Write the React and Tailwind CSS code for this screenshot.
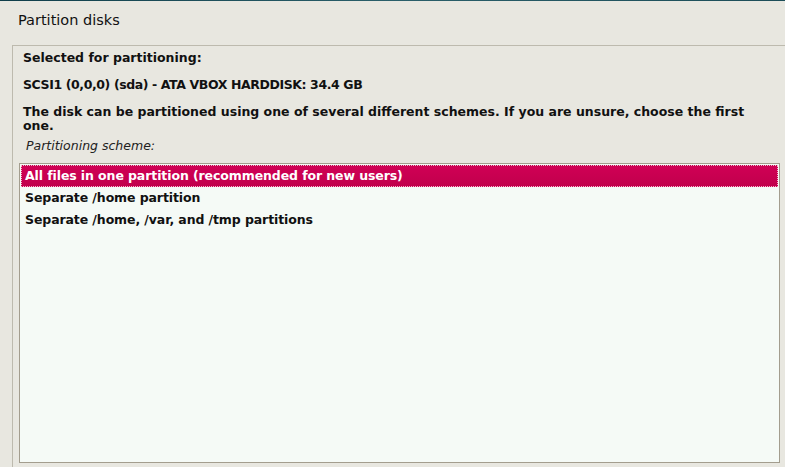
const OPTIONS = [
  'All files in one partition (recommended for new users)',
  'Separate /home partition',
  'Separate /home, /var, and /tmp partitions',
];

export default function App() {
  const selected = 0;

  return (
    <div
      className="h-[467px] w-[785px] overflow-hidden bg-[#e8e7e0] text-[#111] flex flex-col"
      style={{ fontFamily: '"DejaVu Sans", "Liberation Sans", sans-serif' }}
    >
      {/* top strip */}
      <div className="h-px shrink-0 bg-gradient-to-r from-[#0f3e4a] via-[#2a5f6a] to-[#1c4d58]" />

      {/* title */}
      <div className="h-[44px] shrink-0 pl-[18px] pt-[11px] text-[14.5px] leading-[16px]">
        Partition disks
      </div>

      {/* panel */}
      <div className="flex-1 min-h-0 ml-[12px] border-l border-t border-[#bdbaae] pl-[6px] pr-[5px] pt-[5px] flex flex-col">
        <div className="px-[4px] text-[12.5px] font-bold leading-[14px]">
          Selected for partitioning:
        </div>
        <div className="px-[4px] mt-[13px] text-[12.5px] font-bold leading-[14px] tracking-[-0.4px]">
          SCSI1 (0,0,0) (sda) - ATA VBOX HARDDISK: 34.4 GB
        </div>
        <div className="px-[4px] mt-[13px] text-[12.5px] font-bold leading-[14px] pr-[30px]">
          The disk can be partitioned using one of several different schemes. If you are unsure, choose the first one.
        </div>
        <div className="pl-[7px] mt-[6px] text-[12.5px] italic leading-[14px] text-[#222]">
          Partitioning scheme:
        </div>

        {/* list */}
        <div className="mt-[10px] h-[300px] shrink-0 border border-[#a39d8e] bg-[#f5faf6] p-px">
          {OPTIONS.map((label, i) => (
            <div
              key={label}
              className={`h-[22px] pl-[3px] text-[12.5px] font-bold leading-[20px] tracking-[-0.1px] ${
                i === selected
                  ? 'border border-dotted border-[#f3b6cc] bg-gradient-to-b from-[#d00055] to-[#c1004c] text-white'
                  : 'border border-transparent text-[#111]'
              }`}
            >
              {label}
            </div>
          ))}
        </div>
      </div>
    </div>
  );
}
